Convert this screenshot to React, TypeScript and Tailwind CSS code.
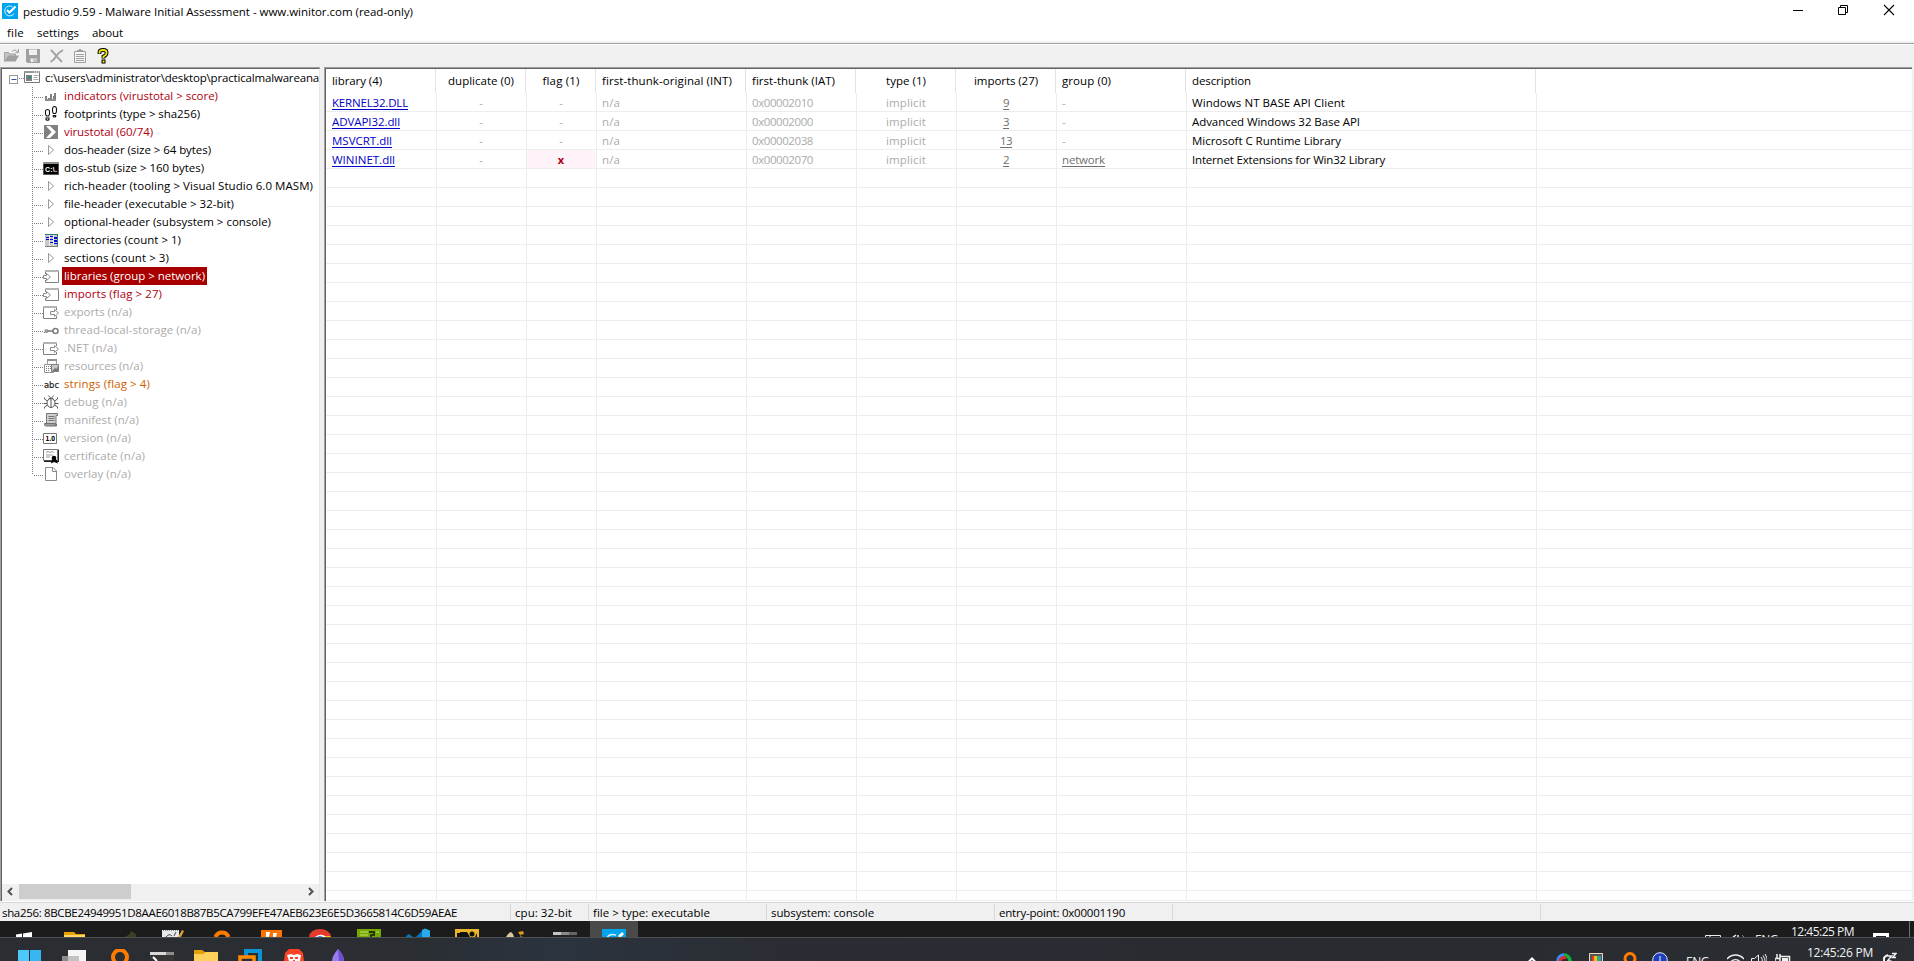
import React, { useLayoutEffect, useRef, useState } from "react";

/* Text set to a fixed advance width by spreading the difference over its letters. */
function Fit({ w, className = "", children }: { w: number; className?: string; children: string }) {
  const ref = useRef<HTMLSpanElement>(null);
  const [spacing, setSpacing] = useState(0);
  useLayoutEffect(() => {
    const el = ref.current;
    if (!el) return;
    const natural = el.getBoundingClientRect().width - spacing * children.length;
    setSpacing((w - natural) / children.length);
  }, [w, children]);
  return (
    <span ref={ref} className={`inline-block shrink-0 whitespace-pre ${className}`} style={{ letterSpacing: `${spacing}px` }}>
      {children}
    </span>
  );
}

function Svg({ w = 16, h = 16, className = "", children }: { w?: number; h?: number; className?: string; children: React.ReactNode }) {
  return (
    <svg width={w} height={h} viewBox={`0 0 ${w} ${h}`} className={`block shrink-0 ${className}`} fill="none">
      {children}
    </svg>
  );
}

const icons: Record<string, React.ReactNode> = {
  bars: (
    <g fill="#808080">
      <path d="M2 8h2v5H2zM5 10h2v3H5zM7 6h2v7H7zM10 8h1v5h-1zM11 5h2v8h-2z" />
      <path d="M2 11h11v2H2z" fill="#909090" />
    </g>
  ),
  feet: (
    <g stroke="#111" strokeWidth="1.1">
      <path d="M2.500 5.500q0-2 2-2t2 2v2q0 1.500-1 2.500h-2q-1-1-1-2.500z" />
      <path d="M3 12h3v1.500q-1.500 1.500-3 0z" />
      <path d="M9.500 3q0-2.500 2-2.500t2 2.500v2q0 1.500-1 2.500h-2q-1-1-1-2.500z" />
      <path d="M10.300 9.500h2.400v1q-1.200 1-2.400 0z" />
    </g>
  ),
  vt: (
    <g>
      <path d="M1 1h14v14H1z" fill="#808080" />
      <path d="M3 2h4l6 6-6 6H3l5.500-6z" fill="#fff" />
    </g>
  ),
  tri: <path d="M5.500 3.500v9l5-4.500z" stroke="#9a9a9a" fill="#fff" />,
  dos: (
    <g>
      <path d="M.500 2.500h15v12H.500z" fill="#000" stroke="#555" />
      <path d="M0 2h16v2H0z" fill="#8c8c8c" />
      <text x="2" y="11.500" fill="#fff" fontSize="7" fontWeight="700" fontFamily="Liberation Sans" textLength="12">C:\.</text>
    </g>
  ),
  dirs: (
    <g shapeRendering="crispEdges">
      <path d="M2 2h13v12H2z" fill="#c8c8c8" />
      <path d="M2 2h13v1H2zM14 2h1v12h-1z" fill="#237a78" />
      <path d="M3 5h3v1H3zM3 7h3v1H3zM7 4h3v1H7zM7 7h3v1H7zM7 10h3v1H7zM11 5h3v2h-3zM11 8h3v2h-3zM11 11h3v1h-3z" fill="#0000e0" />
      <path d="M6 3h1v11H6zM10 3h1v11h-1z" fill="#f0f0f0" />
      <path d="M2 14h13v1H2z" fill="#808080" />
    </g>
  ),
  imp: (
    <g>
      <path d="M2.500 3v11.500h13V3" fill="#fff" stroke="#808080" />
      <path d="M2 2h14v2H2z" fill="#b4b4b4" />
      <path d="M0 6h4v6H0z" fill="#fff" />
      <path d="M.500 7.500h3v-2l4 3.500-4 3.500v-2h-3z" fill="#fff" stroke="#8a8a8a" />
    </g>
  ),
  exp: (
    <g>
      <path d="M.500 3v11.500h13V3" fill="#fff" stroke="#808080" />
      <path d="M0 2h14v2H0z" fill="#b4b4b4" />
      <path d="M12 6h4v6h-4z" fill="#fff" />
      <path d="M7.500 7.500h4v-2l4 3.500-4 3.500v-2h-4z" fill="#fff" stroke="#8a8a8a" />
    </g>
  ),
  key: (
    <g stroke="#808080">
      <circle cx="12.500" cy="9" r="2.500" strokeWidth="1.600" />
      <path d="M5 9h5" strokeWidth="1.600" />
      <circle cx="3.500" cy="9" r="1.500" fill="#aaa" />
      <path d="M1 10.500h1" />
    </g>
  ),
  res: (
    <g>
      <path d="M4.500 1.500h9v6h-9z" fill="#fff" stroke="#a0a0a0" />
      <path d="M4 1h10v2H4z" fill="#909090" />
      <path d="M1.500 6.500h9v8h-9z" fill="#fff" stroke="#909090" />
      <path d="M3 8h1v1H3zM5 8h1v1H5zM7 8h1v1H7zM3 10h1v1H3zM5 10h1v1H5zM7 10h1v1H7zM3 12h1v1H3zM5 12h1v1H5z" fill="#777" />
      <path d="M8.500 6.500h7v7h-7z" fill="#c9c9c9" stroke="#808080" />
      <path d="M9 13l3-3 1.500 1L15 8v5.500z" fill="#777" />
    </g>
  ),
  abc: (
    <text x="1" y="12" fill="#222" fontSize="9" fontFamily="DejaVu Sans" stroke="#222" strokeWidth=".2" textLength="15" lengthAdjust="spacingAndGlyphs">abc</text>
  ),
  bug: (
    <g stroke="#555">
      <ellipse cx="8" cy="9" rx="4" ry="4.500" fill="#fff" />
      <path d="M8 5v8.500M5.500 5q2.500-2.500 5 0M5.500 1.500L7 3.500M10.500 1.500L9 3.500M4.500 7L1.500 5V3.500M11.500 7l3-2V3.500M4 9.500H.500M12 9.500h3.500M4.500 11l-3 2v1.500M11.500 11l3 2v1.500" />
    </g>
  ),
  manifest: (
    <g>
      <path d="M3.500 1.500h11v2H13V12H3.500z" fill="#cfcfcf" stroke="#777" />
      <path d="M5.500 4.500h6M5.500 6.500h6M5.500 8.500h6" stroke="#777" />
      <path d="M1.500 11.500H12v1.500q1 1 1.500-1v2H2.500q-1-.500-1-2.500z" fill="#a0a0a0" stroke="#707070" />
    </g>
  ),
  version: (
    <g>
      <path d="M.500 3.500h13v10H.500z" fill="#fff" stroke="#777" />
      <text x="2.500" y="11.200" fill="#000" fontSize="7" fontWeight="700" fontFamily="DejaVu Sans" textLength="9.500" lengthAdjust="spacingAndGlyphs">1.0</text>
    </g>
  ),
  cert: (
    <g>
      <path d="M.500 1.500h14v11H.500z" fill="#fff" stroke="#777" />
      <path d="M15 1.500h1V14H1v-1.500h14z" fill="#222" />
      <path d="M3 4.500l2-1 2 1 2-1 2 1M3 7h7M3 9h4" stroke="#999" />
      <circle cx="11" cy="10" r="2.300" fill="#000" />
      <path d="M9 11l-1 4.500 3-1.500 4 1.500-2-4.500z" fill="#000" />
    </g>
  ),
  page: (
    <g stroke="#8a8a8a">
      <path d="M2.500 1.500h7.500l3.500 3.500v9.500h-11z" fill="#fff" />
      <path d="M9.500 1.500V5.500h4" />
    </g>
  ),
};

type Node = { icon: string; text: string; w: number; tone: string };
const RED = "text-[#b00010]";
const BLACK = "text-black";
const GREY = "text-[#ababab]";
const nodes: Node[] = [
  { icon: "bars", text: "indicators (virustotal > score)", w: 154, tone: RED },
  { icon: "feet", text: "footprints (type > sha256)", w: 136, tone: BLACK },
  { icon: "vt", text: "virustotal (60/74)", w: 89, tone: RED },
  { icon: "tri", text: "dos-header (size > 64 bytes)", w: 147, tone: BLACK },
  { icon: "dos", text: "dos-stub (size > 160 bytes)", w: 140, tone: BLACK },
  { icon: "tri", text: "rich-header (tooling > Visual Studio 6.0 MASM)", w: 249, tone: BLACK },
  { icon: "tri", text: "file-header (executable > 32-bit)", w: 170, tone: BLACK },
  { icon: "tri", text: "optional-header (subsystem > console)", w: 207, tone: BLACK },
  { icon: "dirs", text: "directories (count > 1)", w: 117, tone: BLACK },
  { icon: "tri", text: "sections (count > 3)", w: 105, tone: BLACK },
  { icon: "imp", text: "libraries (group > network)", w: 141, tone: "text-white" },
  { icon: "imp", text: "imports (flag > 27)", w: 98, tone: RED },
  { icon: "exp", text: "exports (n/a)", w: 68, tone: GREY },
  { icon: "key", text: "thread-local-storage (n/a)", w: 137, tone: GREY },
  { icon: "exp", text: ".NET (n/a)", w: 53, tone: GREY },
  { icon: "res", text: "resources (n/a)", w: 79, tone: GREY },
  { icon: "abc", text: "strings (flag > 4)", w: 86, tone: "text-[#d06000]" },
  { icon: "bug", text: "debug (n/a)", w: 63, tone: GREY },
  { icon: "manifest", text: "manifest (n/a)", w: 75, tone: GREY },
  { icon: "version", text: "version (n/a)", w: 67, tone: GREY },
  { icon: "cert", text: "certificate (n/a)", w: 81, tone: GREY },
  { icon: "page", text: "overlay (n/a)", w: 67, tone: GREY },
];

function TreeRow({ node, last }: { node: Node; last: boolean }) {
  const selected = node.tone === "text-white";
  return (
    <div className="flex h-[18px] items-center pl-[30px]">
      <Svg w={11} h={18}>
        <path d={last ? "M.5 0v10" : "M.5 0v18"} stroke="#7c7c7c" strokeDasharray="1 1" />
        <path d="M2 10.500h9" stroke="#7c7c7c" strokeDasharray="1 1" />
      </Svg>
      <Svg>{icons[node.icon]}</Svg>
      <div className={`ml-[3px] flex h-[18px] items-center px-[2px] ${selected ? "bg-[#a80000]" : ""}`}>
        <Fit w={node.w} className={node.tone}>{node.text}</Fit>
      </div>
    </div>
  );
}

const GRID = "grid grid-cols-[111px_90px_70px_150px_110px_100px_100px_130px_350px_376px]";
const headers: { t: string; w: number; c?: boolean }[] = [
  { t: "library (4)", w: 50 },
  { t: "duplicate (0)", w: 66, c: true },
  { t: "flag (1)", w: 37, c: true },
  { t: "first-thunk-original (INT)", w: 130 },
  { t: "first-thunk (IAT)", w: 83 },
  { t: "type (1)", w: 40, c: true },
  { t: "imports (27)", w: 64, c: true },
  { t: "group (0)", w: 49 },
  { t: "description", w: 59 },
];
const libs = [
  { name: "KERNEL32.DLL", w: 76, iat: "0x00002010", n: "9", group: "-", desc: "Windows NT BASE API Client", dw: 153 },
  { name: "ADVAPI32.dll", w: 68, iat: "0x00002000", n: "3", group: "-", desc: "Advanced Windows 32 Base API", dw: 168 },
  { name: "MSVCRT.dll", w: 60, iat: "0x00002038", n: "13", group: "-", desc: "Microsoft C Runtime Library", dw: 149 },
  { name: "WININET.dll", w: 63, iat: "0x00002070", n: "2", group: "network", desc: "Internet Extensions for Win32 Library", dw: 193 },
];

function Cell({ center = false, first = false, className = "", children }: { center?: boolean; first?: boolean; className?: string; children?: React.ReactNode }) {
  return (
    <div className={`flex items-center overflow-hidden border-r border-b border-[#ededed] pt-px ${center ? "justify-center pr-px" : first ? "pl-[6px]" : "pl-[5px]"} ${className}`}>
      {children}
    </div>
  );
}

function Table() {
  const blanks = Array.from({ length: 39 });
  return (
    <div className="flex w-[1588px] flex-col overflow-hidden border-t border-l border-[#a0a0a0]">
      <div className="flex h-full flex-col overflow-hidden border-t border-l border-[#646464] bg-white">
        <div className={`${GRID} h-6 shrink-0`}>
          {headers.map((h, i) => (
            <div key={h.t} className={`mr-px flex items-center border-r border-[#e2e2e2] pb-px ${h.c ? "justify-center" : i === 0 ? "pl-[6px]" : "pl-[5px]"}`}>
              <Fit w={h.w}>{h.t}</Fit>
            </div>
          ))}
        </div>
        {libs.map((l) => (
          <div key={l.name} className={`${GRID} h-[19px] shrink-0 text-[#ababab]`}>
            <Cell first>
              <Fit w={l.w} className="text-[#0000c8] underline underline-offset-2">{l.name}</Fit>
            </Cell>
            <Cell center>-</Cell>
            {l.group === "network" ? (
              <Cell center className="bg-[#fff3fa] text-[11px] font-bold text-[#b00010]">x</Cell>
            ) : (
              <Cell center>-</Cell>
            )}
            <Cell><Fit w={18}>n/a</Fit></Cell>
            <Cell><Fit w={61}>{l.iat}</Fit></Cell>
            <Cell center><Fit w={40}>implicit</Fit></Cell>
            <Cell center><Fit w={l.n.length * 6} className="text-[#707070] underline underline-offset-2">{l.n}</Fit></Cell>
            <Cell>
              {l.group === "-" ? "-" : <Fit w={43} className="text-[#707070] underline underline-offset-2">{l.group}</Fit>}
            </Cell>
            <Cell><Fit w={l.dw} className="text-black">{l.desc}</Fit></Cell>
            <Cell />
          </div>
        ))}
        {blanks.map((_, i) => (
          <div key={i} className={`${GRID} ${i === 38 ? "h-[10px] shrink-0" : "h-[19px] shrink-0"}`}>
            {Array.from({ length: 10 }).map((__, j) => <Cell key={j} />)}
          </div>
        ))}
      </div>
    </div>
  );
}

function Tree() {
  return (
    <div className="flex w-[320px] shrink-0 flex-col border-t border-l border-[#a0a0a0]">
      <div className="flex h-full flex-col border-t border-r border-l border-t-[#646464] border-r-[#e8e8e8] border-l-[#646464] bg-white">
        <div className="flex h-[18px] w-[317px] items-center overflow-hidden pl-[7px]">
          <Svg w={15} h={18}>
            <rect x=".5" y="6.500" width="8" height="8" fill="#fff" stroke="#999" />
            <path d="M2.500 10.500h5" stroke="#3b50a0" />
            <path d="M10 9.500h5" stroke="#7c7c7c" strokeDasharray="1 1" />
          </Svg>
          <Svg>
            <path d="M.500 1.500h15v11H.500z" fill="#fff" stroke="#777" />
            <path d="M0 1h16v2H0z" fill="#999" />
            <path d="M10 1.500h1v1h-1zM12 1.500h1v1h-1zM14 1.500h1v1h-1z" fill="#fff" />
            <path d="M2 5h6v6H2z" fill="#808080" />
            <path d="M4 6h3v3H4z" fill="#3f8a83" />
            <path d="M9.500 5.500h5M9.500 7.500h4M9.500 9.500h5" stroke="#aaa" />
          </Svg>
          <Fit w={274} className="ml-[5px]">{"c:\\users\\administrator\\desktop\\practicalmalwareana"}</Fit>
        </div>
        {nodes.map((n, i) => <TreeRow key={n.text} node={n} last={i === nodes.length - 1} />)}
        <div className="mt-auto flex h-[15px] items-center justify-between bg-[#f0f0f0]">
          <Svg w={17} h={15}><path d="M10 4L6.500 7.500 10 11" stroke="#505050" strokeWidth="2" /></Svg>
          <div className="mr-auto h-[15px] w-28 bg-[#cdcdcd]" />
          <Svg w={17} h={15}><path d="M7 4l3.500 3.500L7 11" stroke="#505050" strokeWidth="2" /></Svg>
        </div>
        <div className="h-[2px] bg-[#f0f0f0]" />
      </div>
    </div>
  );
}

function Toolbar() {
  return (
    <div className="flex h-[22px] items-center bg-[#f0f0f0] pl-1">
      <Svg w={16}>
        <path d="M.500 13.500v-9h4l1 1.500h6v2" stroke="#a0a0a0" fill="#c4c4c4" />
        <path d="M.500 13.500L4 7.500h11L11.500 13.500z" fill="#a0a0a0" />
        <path d="M8 3.500q3-3 6 .500M14.500 1v3.500h-3" stroke="#a0a0a0" />
      </Svg>
      <Svg className="ml-[5px]">
        <path d="M1 1h14v14H2.500L1 13.500z" fill="#a0a0a0" />
        <path d="M4 1.500h8V7H4z" fill="#f0f0f0" />
        <path d="M5 10h7v4H5z" fill="#c4c4c4" />
        <path d="M6 11h2v3H6z" fill="#f0f0f0" />
      </Svg>
      <Svg className="ml-2">
        <path d="M2 2q4 4 5 5.500T13 14M14 2Q9 5 7 8.500T1.500 14" stroke="#a0a0a0" strokeWidth="1.800" />
      </Svg>
      <Svg className="ml-[7px]">
        <path d="M2.500 3.500h11v11h-11z" fill="#f4f4f4" stroke="#a0a0a0" />
        <path d="M5 3V2h2V1h2v1h2v2H5zM4 6h8v1H4zM4 8h8v1H4zM4 10h8v1H4zM4 12h8v1H4z" fill="#a0a0a0" />
      </Svg>
      <Svg className="ml-[7px]">
        <path d="M4.500 6V4q0-2 3.500-2t3.500 2v1.500Q11.500 7 8.500 8.500V10.500" stroke="#000" strokeWidth="3.800" />
        <path d="M6.500 11.500h4v4h-4z" fill="#000" />
        <path d="M4.500 5.500V4q0-2 3.500-2t3.500 2v1.500Q11.500 7 8.500 8.500V10" stroke="#f5ea00" strokeWidth="1.800" />
        <path d="M7.500 12.500h2v2h-2z" fill="#f5ea00" />
      </Svg>
    </div>
  );
}

function AppLogo() {
  return (
    <Svg>
      <path d="M0 0h16v16H0z" fill="#00a4ee" />
      <path d="M12 10.500A5 5 0 1 1 10.500 3.800" stroke="#d5f0fc" />
      <path d="M5 7l2.500 2.500L13.500 3.500" stroke="#fff" strokeWidth="2" />
    </Svg>
  );
}

function StatusBar() {
  return (
    <div className="flex h-[19px] shrink-0 border-t border-[#d7d7d7] bg-[#f0f0f0] [&>div]:my-px [&>div]:flex [&>div]:items-center [&>div]:border-r [&>div]:border-[#d7d7d7] [&>div]:pt-[2px]">
      <div className="w-[511px] pl-[2px]"><Fit w={455}>sha256: 8BCBE24949951D8AAE6018B87B5CA799EFE47AEB623E6E5D3665814C6D59AEAE</Fit></div>
      <div className="w-[78px] pl-1"><Fit w={57}>cpu: 32-bit</Fit></div>
      <div className="w-[178px] pl-1"><Fit w={117}>{"file > type: executable"}</Fit></div>
      <div className="w-[228px] pl-1"><Fit w={103}>subsystem: console</Fit></div>
      <div className="w-[178px] pl-1"><Fit w={126}>entry-point: 0x00001190</Fit></div>
      <div className="w-[368px]" />
    </div>
  );
}

/* Tops of the guest taskbar icons; the host taskbar hides the rest. */
const guestIcons: React.ReactNode[] = [
  <path key="a" d="M2 13.500l6-1V16H2zM9 12.500l9-1.500V16H9z" fill="#fff" />,
  <g key="b"><path d="M1 11h10l2 2h9v3H1z" fill="#e8a200" /><path d="M1 14h21v2H1z" fill="#ffd767" /></g>,
  <path key="c" d="M12 16q6-2 7-6 6 3 6 6z" fill="#3d3f22" />,
  <g key="d"><path d="M1 9h17v7H1z" fill="#e6e9ea" /><path d="M2 9.500h15" stroke="#7d9aa8" strokeDasharray="1 1" /><path d="M5 16q3-4 6-1M13 15l2-4" stroke="#444" /><path d="M17 16l4-7 2 1-3 6z" fill="#d8a335" /></g>,
  <path key="e" d="M5.500 18a7 7 0 0 1 13 0" stroke="#ff7b00" strokeWidth="4" transform="translate(0 -2)" />,
  <g key="f"><path d="M2 9h21v7H2z" fill="#ff7200" /><path d="M7 11h4l-1 5H7zM14 12h4l-1 4h-3z" fill="#fff" /></g>,
  <g key="g"><path d="M1 16a11 8 0 0 1 22 0z" fill="#e33b2e" /><path d="M7 16q5-4 10-1l6 1z" fill="#fff" /><path d="M9 16q3-2 6 0z" fill="#3f7ee8" /><path d="M17 15h5l1 1h-6z" fill="#fbc116" /></g>,
  <g key="h"><path d="M0 8h24v8H0z" fill="#76a800" /><path d="M3 11h8M3 14h8M19 11h3" stroke="#c1df75" /><path d="M12 11h5v3h-3v2" stroke="#26380a" strokeWidth="2" /></g>,
  <g key="i"><path d="M0 15l3-2 4 3H0zM10 16l8-8 3 0v8z" fill="#0076be" /><path d="M16 9l3-1.500 5 2V16h-8z" fill="#29a9f2" /></g>,
  <g key="j"><path d="M0 8h24v8H0z" fill="#e9b52b" /><path d="M2 12h3v-1h7l3 5H2z" fill="#111" /><circle cx="17" cy="13" r="2.500" fill="#111" /><path d="M20 16l2-4v4z" fill="#111" /></g>,
  <g key="k"><path d="M2 16q2-4 5-5 3 2 3 5z" fill="#d9c8a0" /><path d="M14 11l5-1 1 3-4 1z" fill="#d89b1c" /><path d="M16 14l3 2h-3z" fill="#8a6620" /></g>,
  <g key="l"><path d="M0 11h24v3H0z" fill="#8b8a8d" /><path d="M0 11h8v3H0z" fill="#c4c4c6" /><path d="M16 11h8v3h-8z" fill="#666" /><path d="M0 14h24v2H0z" fill="#242424" /></g>,
  <g key="m"><path d="M0 8h24v8H0z" fill="#00a4ee" /><path d="M5 17q2-5 9-3" stroke="#d5f0fc" strokeWidth="1.500" /><path d="M17 16l4-4" stroke="#fff" strokeWidth="3" /></g>,
];

function GuestTaskbar() {
  return (
    <div className="flex h-4 shrink-0 overflow-hidden bg-[#1c1c1c] pl-[2px]">
      <div className="flex gap-px">
        {guestIcons.map((g, i) => (
          <div key={i} className={`flex w-12 justify-center ${i === 12 ? "bg-[#4a4a4a]" : ""}`}>
            <Svg w={24}>{g}</Svg>
          </div>
        ))}
      </div>
      <div className="ml-auto flex items-start">
        <Svg w={17}><path d="M.500 16v-1.500h15V16M5 16v-2" stroke="#eee" /></Svg>
        <Svg w={14} className="ml-[10px]"><path d="M1 16l3-2M6 16v-2" stroke="#eee" strokeWidth="1.500" /><path d="M10 14l2 2" stroke="#888" /></Svg>
        <span className="ml-[9px] mt-[12px] text-[12px] leading-[14px] text-[#eee]"><Fit w={23}>ENG</Fit></span>
        <span className="ml-[13px] mt-[3px] text-[12px] leading-[16px] text-[#f2f2f2]"><Fit w={63}>12:45:25 PM</Fit></span>
        <Svg w={16} className="ml-[19px]"><path d="M0 12h16v4H0z" fill="#fff" /><path d="M3 15h10v1H3z" fill="#1c1c1c" /></Svg>
        <div className="mr-1 ml-5 h-4 w-px bg-[#707070]" />
      </div>
    </div>
  );
}

const hostIcons: React.ReactNode[] = [
  <g key="a"><path d="M0 1h11v11H0z" fill="#4cc8fb" /><path d="M12 1h11v11H12z" fill="#38b6f2" /></g>,
  <g key="b"><path d="M6 1h18v11H6z" fill="#f5f5f5" /><path d="M0 7h17v5H0z" fill="#8c8c8c" /><path d="M6 7h11v5H6z" fill="#c2c2c2" /></g>,
  <path key="c" d="M9 12a7 7 0 1 1 10 0" stroke="#ff7b00" strokeWidth="4" transform="translate(0 1)" />,
  <g key="d"><path d="M0 3h24v9H0z" fill="#363636" /><path d="M0 3h16v3H0z" fill="#d8d8d8" /><path d="M16 3h8v3h-8z" fill="#8d8d8d" /><path d="M3 8l4 4" stroke="#fff" strokeWidth="2" /></g>,
  <g key="e"><path d="M0 1h8l3 2h13v9H0z" fill="#e2a100" /><path d="M0 5h9l3-2h12v9H0z" fill="#ffd05a" /></g>,
  <g key="f"><path d="M8 8V2h14v10" stroke="#0a95d8" strokeWidth="4" /><path d="M2 12V8h14v4" stroke="#ff8a00" strokeWidth="3.500" /></g>,
  <g key="g"><path d="M2 12L3 4l4-4h10l4 4 1 8z" fill="#fb4224" /><path d="M5 6l4-1 3 1 3-1 4 1-1 6H7z" fill="#fff" /><path d="M8 8h3v2H8zM13 8h3v2h-3zM11 11h2v1h-2z" fill="#fb4224" /></g>,
  <g key="h"><path d="M6 12q0-5 6-12 6 6 6 12z" fill="#9a7cf0" /><path d="M12 0q6 6 6 12h-5z" fill="#6e4fd0" /></g>,
];

function HostTaskbar() {
  return (
    <div className="flex h-6 shrink-0 items-end overflow-hidden border-t border-[#4d5053] bg-[linear-gradient(90deg,#2a2e32_0%,#2a2e33_22%,#2b343f_29%,#2a2d33_40%,#282b30_70%,#2a2e33_100%)] pl-2 text-[#f2f2f2]">
      <div className="flex">
        {hostIcons.map((g, i) => (
          <div key={i} className="flex w-11 justify-center"><Svg w={24} h={12}>{g}</Svg></div>
        ))}
      </div>
      <div className="ml-auto flex h-[23px] items-start">
        <Svg w={8} h={23}><path d="M.500 24L4 20.500 7.500 24" stroke="#fff" strokeWidth="2" /></Svg>
        <Svg w={16} h={23} className="ml-5">
          <path d="M2 23A6 6 0 0 1 8 17" stroke="#2f8fff" strokeWidth="3.500" />
          <path d="M8 17a6 6 0 0 1 6 6" stroke="#12b03c" strokeWidth="3.500" />
          <path d="M4 23a4 4 0 0 1 6-3" stroke="#e8262a" strokeWidth="3" />
        </Svg>
        <Svg w={14} h={23} className="ml-[17px]">
          <path d="M.500 15.500h13V24H.500z" fill="#555" stroke="#e8dcc0" />
          <path d="M3 18h3v5H3z" fill="#e83a20" /><path d="M5 18h3v5H5z" fill="#f2c218" /><path d="M8 18h2v5H8z" fill="#37b34a" /><path d="M10 18h2v5h-2z" fill="#1b9fe0" />
        </Svg>
        <Svg w={14} h={23} className="ml-5"><path d="M4 24.500a5 5 0 1 1 6 0" stroke="#ff7b00" strokeWidth="3" /></Svg>
        <Svg w={16} h={23} className="ml-[15px]"><circle cx="8" cy="22" r="7.300" fill="#1d3fb8" stroke="#dfe6ff" /><path d="M8 18v6" stroke="#fff" /></Svg>
        <span className="ml-[18px] mt-[17px] text-[12px] leading-[14px]"><Fit w={23}>ENG</Fit></span>
        <Svg w={17} h={23} className="ml-[18px]"><path d="M0 21a11 11 0 0 1 17 0M4 23.500a6.500 6.500 0 0 1 9 0" stroke="#f2f2f2" strokeWidth="1.300" /></Svg>
        <Svg w={16} h={23} className="ml-[7px]"><path d="M.500 24v-3.500h3L7.500 17v7" stroke="#f2f2f2" /><path d="M10 19q2 2 1 5M12 17.500q2.500 3 2 6.500M14 16q3 4 2 8" stroke="#f2f2f2" /></Svg>
        <Svg w={17} h={23} className="ml-[8px]"><path d="M5 18.500h9.500V24M0 24l0-3.500h5V24M2 20v-4M5 20v-4" stroke="#f2f2f2" strokeWidth="1.500" /><path d="M7 20h6v3H7z" fill="#f2f2f2" /></Svg>
        <span className="ml-[15px] mt-[7px] text-[12px] leading-[16px]"><Fit w={66}>12:45:26 PM</Fit></span>
        <Svg w={14} h={23} className="mr-[17px] ml-[10px]"><path d="M1 24v-4q1-2 4-3" stroke="#f2f2f2" strokeWidth="2" /><path d="M4.500 18h4l-4 5h4M9 15.500h4l-3.500 4H13" stroke="#f2f2f2" strokeWidth="1.400" /></Svg>
      </div>
    </div>
  );
}

export default function App() {
  return (
    <div className="flex h-[961px] w-[1914px] flex-col overflow-hidden bg-white font-['Open_Sans','Noto_Sans',sans-serif] text-[11.5px] leading-[18px] text-black">
      <div className="flex h-6 shrink-0 items-start pl-[2px]">
        <div className="mt-[3px]"><AppLogo /></div>
        <Fit w={390} className="mt-[3px] ml-[5px]">pestudio 9.59 - Malware Initial Assessment - www.winitor.com (read-only)</Fit>
        <div className="ml-auto flex pt-1 pr-[15px]">
          <Svg w={12} h={12}><path d="M1 6.500h10" stroke="#000" /></Svg>
          <Svg w={12} h={12} className="ml-[33px]"><path d="M1.500 3.500h7v7h-7zM3.500 3V1.500h7v7H9" stroke="#000" /></Svg>
          <Svg w={12} h={12} className="mr-1 ml-[34px]"><path d="M1 1l10 10M11 1L1 11" stroke="#000" strokeWidth="1.100" /></Svg>
        </div>
      </div>
      <div className="flex h-[17px] shrink-0 items-center pl-[7px]">
        <Fit w={17}>file</Fit>
        <Fit w={42} className="ml-[13px]">settings</Fit>
        <Fit w={31} className="ml-[13px]">about</Fit>
      </div>
      <div className="h-[2px] shrink-0 bg-[#f0f0f0]" />
      <div className="h-px shrink-0 bg-[#a0a0a0]" />
      <div className="h-px shrink-0 bg-white" />
      <Toolbar />
      <div className="flex h-[834px] shrink-0 bg-[#f0f0f0]">
        <Tree />
        <div className="w-1 shrink-0" />
        <Table />
      </div>
      <div className="h-px shrink-0 bg-white" />
      <StatusBar />
      <GuestTaskbar />
      <HostTaskbar />
    </div>
  );
}
